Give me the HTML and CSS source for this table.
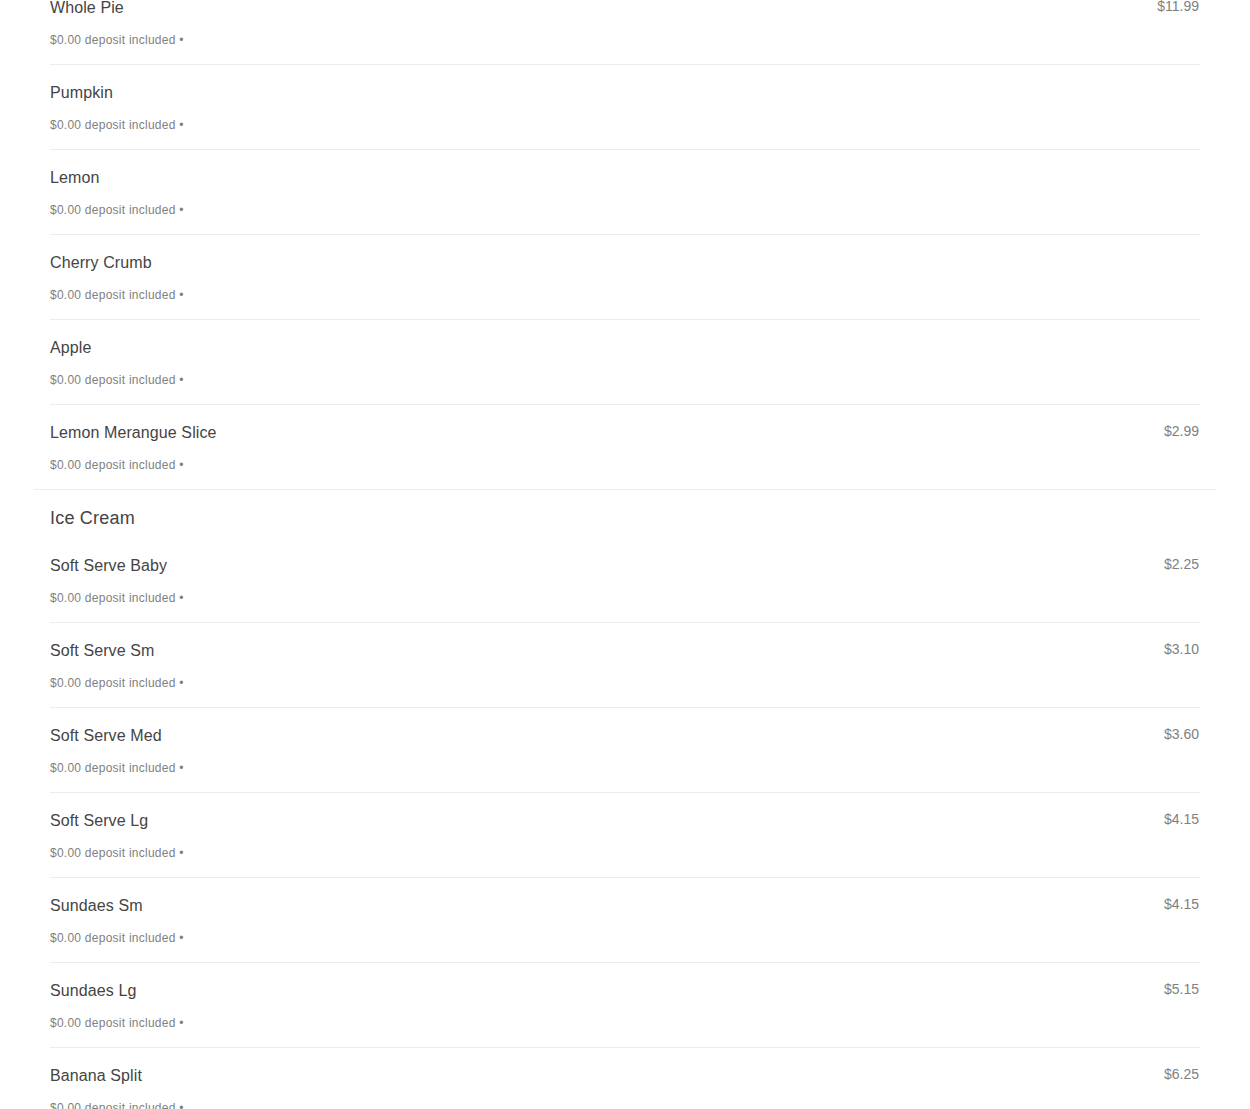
FILE: index.html
```html
<!DOCTYPE html>
<html lang="en">
<head>
  <meta charset="UTF-8" />
  <meta name="viewport" content="width=device-width, initial-scale=1.0" />
  <title>Menu</title>
  <link rel="stylesheet" href="styles.css">
</head>
<body>
  <div class="menu">
    <!-- Pies (scrolled, header above the fold) -->
    <div class="menu-section">
      <div class="menu-item">
        <div class="item-info">
          <div class="item-name">Whole Pie</div>
          <div class="item-meta">$0.00 deposit included •</div>
        </div>
        <div class="item-price">$11.99</div>
      </div>
      <div class="menu-item">
        <div class="item-info">
          <div class="item-name">Pumpkin</div>
          <div class="item-meta">$0.00 deposit included •</div>
        </div>
        <div class="item-price"></div>
      </div>
      <div class="menu-item">
        <div class="item-info">
          <div class="item-name">Lemon</div>
          <div class="item-meta">$0.00 deposit included •</div>
        </div>
        <div class="item-price"></div>
      </div>
      <div class="menu-item">
        <div class="item-info">
          <div class="item-name">Cherry Crumb</div>
          <div class="item-meta">$0.00 deposit included •</div>
        </div>
        <div class="item-price"></div>
      </div>
      <div class="menu-item">
        <div class="item-info">
          <div class="item-name">Apple</div>
          <div class="item-meta">$0.00 deposit included •</div>
        </div>
        <div class="item-price"></div>
      </div>
      <div class="menu-item">
        <div class="item-info">
          <div class="item-name">Lemon Merangue Slice</div>
          <div class="item-meta">$0.00 deposit included •</div>
        </div>
        <div class="item-price">$2.99</div>
      </div>
    </div>

    <div class="menu-section">
      <h2 class="section-title">Ice Cream</h2>
      <div class="menu-item">
        <div class="item-info">
          <div class="item-name">Soft Serve Baby</div>
          <div class="item-meta">$0.00 deposit included •</div>
        </div>
        <div class="item-price">$2.25</div>
      </div>
      <div class="menu-item">
        <div class="item-info">
          <div class="item-name">Soft Serve Sm</div>
          <div class="item-meta">$0.00 deposit included •</div>
        </div>
        <div class="item-price">$3.10</div>
      </div>
      <div class="menu-item">
        <div class="item-info">
          <div class="item-name">Soft Serve Med</div>
          <div class="item-meta">$0.00 deposit included •</div>
        </div>
        <div class="item-price">$3.60</div>
      </div>
      <div class="menu-item">
        <div class="item-info">
          <div class="item-name">Soft Serve Lg</div>
          <div class="item-meta">$0.00 deposit included •</div>
        </div>
        <div class="item-price">$4.15</div>
      </div>
      <div class="menu-item">
        <div class="item-info">
          <div class="item-name">Sundaes Sm</div>
          <div class="item-meta">$0.00 deposit included •</div>
        </div>
        <div class="item-price">$4.15</div>
      </div>
      <div class="menu-item">
        <div class="item-info">
          <div class="item-name">Sundaes Lg</div>
          <div class="item-meta">$0.00 deposit included •</div>
        </div>
        <div class="item-price">$5.15</div>
      </div>
      <div class="menu-item">
        <div class="item-info">
          <div class="item-name">Banana Split</div>
          <div class="item-meta">$0.00 deposit included •</div>
        </div>
        <div class="item-price">$6.25</div>
      </div>
    </div>
  </div>
</body>
</html>
```
FILE: styles.css
```css
body {
  font-family: "Liberation Sans", Arial, sans-serif;
  background: #fff;
  color: #444;
  margin: 0;
  padding: 0;
}
.menu {
  margin: -20px 34px 0;
}
.menu-section {
  padding: 0 16px;
  border-bottom: 1px solid #ececec;
}
.section-title {
  font-size: 18px;
  line-height: 22px;
  font-weight: normal;
  letter-spacing: 0.2px;
  color: #444;
  margin: 0;
  padding: 17px 0 9px;
}
.menu-item {
  display: flex;
  justify-content: space-between;
  align-items: flex-start;
  padding: 18px 1px 16px 0;
  border-bottom: 1px solid #ececec;
}
.menu-item:last-child {
  border-bottom: none;
}
.item-name {
  font-size: 16px;
  line-height: 20px;
  letter-spacing: 0.1px;
  color: #444;
}
.item-meta {
  font-size: 12px;
  line-height: 16px;
  letter-spacing: 0.25px;
  color: #808080;
  margin-top: 14px;
}
.item-price {
  font-size: 14px;
  line-height: 16px;
  color: #808080;
}
```
